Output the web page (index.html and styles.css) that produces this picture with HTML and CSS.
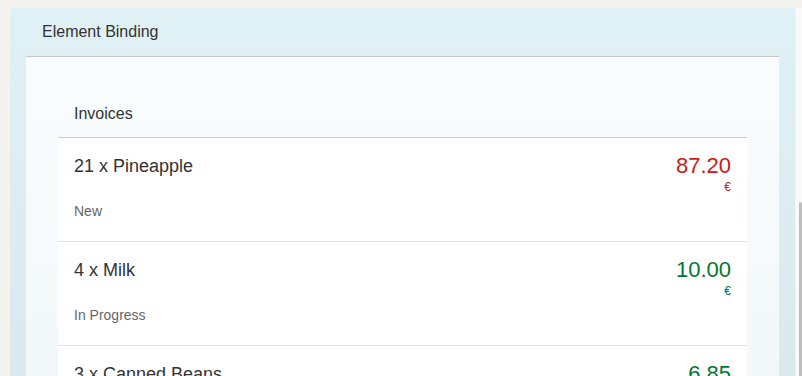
FILE: index.html
```html
<!DOCTYPE html>
<html>
    <head>
        <link rel="stylesheet" href="styles.css">
    </head>
    <body>
        <div class="page">
            <div class="panel">
                <div class="panel-header">Element Binding</div>
                <div class="panel-content">
                    <div class="list">
                        <div class="list-header">Invoices</div>
                        <div class="item">
                            <div class="item-left">
                                <div class="item-title">21 x Pineapple</div>
                                <div class="item-status">New</div>
                            </div>
                            <div class="item-right negative">
                                <div class="item-number">87.20</div>
                                <div class="item-unit">€</div>
                            </div>
                        </div>
                        <div class="item">
                            <div class="item-left">
                                <div class="item-title">4 x Milk</div>
                                <div class="item-status">In Progress</div>
                            </div>
                            <div class="item-right positive">
                                <div class="item-number">10.00</div>
                                <div class="item-unit">€</div>
                            </div>
                        </div>
                        <div class="item">
                            <div class="item-left">
                                <div class="item-title">3 x Canned Beans</div>
                            </div>
                            <div class="item-right positive">
                                <div class="item-number">6.85</div>
                            </div>
                        </div>
                    </div>
                </div>
            </div>
            <div class="scroll-track">
                <div class="scroll-thumb"></div>
            </div>
        </div>
    </body>
</html>
```

FILE: styles.css
```css
html, body{
    margin:0px;
    height:100%;
    overflow:hidden;
}
body{
    background-color:#f5f3ee;
    font-family:"Liberation Sans", Arial, sans-serif;
    color:#333333;
}
.page{
    display:flex;
    height:100%;
}
.panel{
    width:785px;
    margin-left:10px;
    margin-top:8px;
    background:linear-gradient(#dff1f4, #dbe9ef);
}
.panel-header{
    height:48px;
    line-height:48px;
    padding-left:32px;
    font-size:16px;
    color:#333333;
}
.panel-content{
    margin:0px 16px;
    padding:0px 32px 40px 32px;
    border-top:1px solid #c6c6c6;
    background:linear-gradient(#f9fcfd, #f1f7f9);
    min-height:330px;
}
.list{
    padding-top:33px;
}
.list-header{
    line-height:47px;
    padding-left:16px;
    font-size:16px;
    border-bottom:1px solid #cccccc;
}
.item{
    display:flex;
    justify-content:space-between;
    background:white;
    padding:16px 16px 21px 16px;
    border-bottom:1px solid #e5e5e5;
}
.item-title{
    font-size:18px;
    line-height:24px;
    color:#333333;
}
.item-status{
    margin-top:24px;
    font-size:14px;
    line-height:18px;
    color:#666666;
}
.item-right{
    text-align:right;
}
.item-number{
    font-size:22px;
    line-height:24px;
}
.item-unit{
    font-size:12px;
    line-height:18px;
}
.negative{
    color:#cc1919;
}
.positive{
    color:#007833;
}
.scroll-track{
    flex:1;
    margin-left:1px;
    margin-top:8px;
    background:#f9f9f9;
    padding-top:194px;
}
.scroll-thumb{
    width:3px;
    height:200px;
    margin-left:3px;
    background:#bdbdbd;
    border-radius:2px;
}
```
